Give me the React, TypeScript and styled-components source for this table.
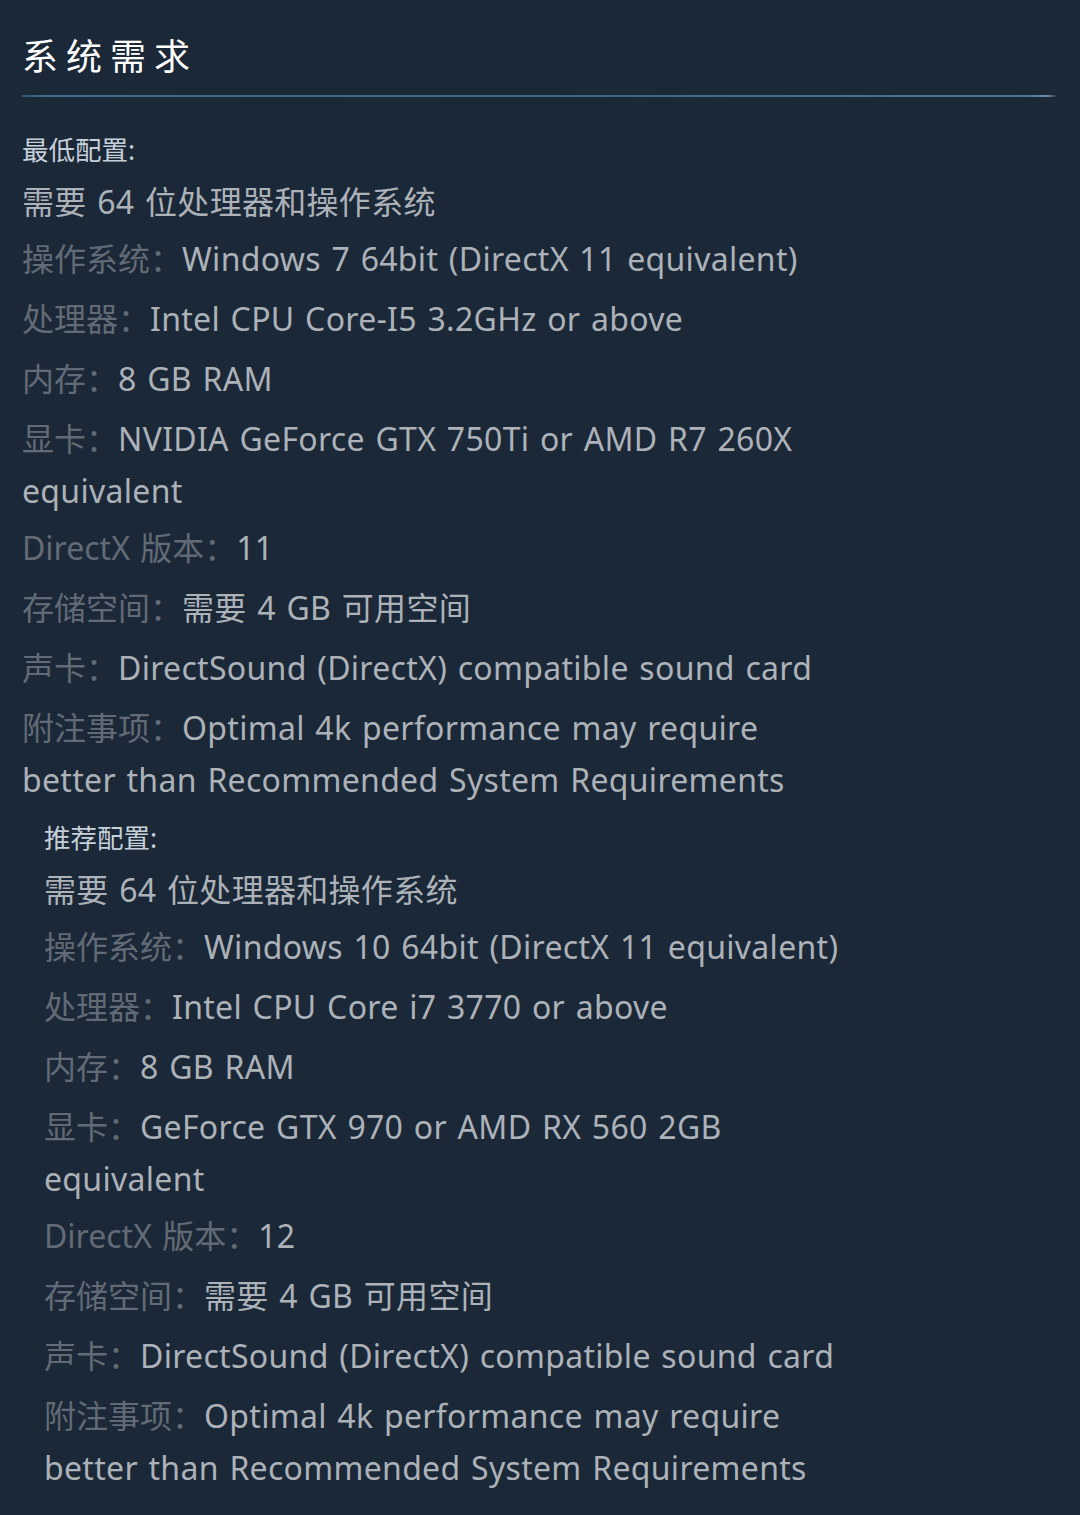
import React from "react";
import styled, { createGlobalStyle } from "styled-components";

const GlobalStyle = createGlobalStyle`
  html, body {
    margin: 0;
    padding: 0;
    background: #1b2838;
  }
  body {
    font-family: "Noto Sans", "Noto Sans CJK SC", sans-serif;
  }
`;

const Page = styled.div`
  min-height: 1515px;
  box-sizing: border-box;
  padding: 35px 22px 0;
  background: #1b2838;
  font-family: "Noto Sans", "Noto Sans CJK SC", sans-serif;
`;

const Title = styled.h2`
  margin: 0;
  font-size: 36px;
  line-height: 44px;
  font-weight: 400;
  letter-spacing: 8px;
  color: #ffffff;
`;

const Rule = styled.div`
  height: 2px;
  margin-top: 16px;
  background: linear-gradient(
    90deg,
    #2f5673 0%,
    #3d6b8b 2%,
    #3f6885 60%,
    #4b7594 97%,
    #6a8ca8 99%,
    rgba(60, 90, 115, 0) 100%
  );
`;

const Section = styled.section<{ $indent?: boolean }>`
  margin-top: ${(p) => (p.$indent ? "16px" : "35px")};
  margin-left: ${(p) => (p.$indent ? "22px" : "0")};
`;

const Heading = styled.div`
  font-size: 26.5px;
  line-height: 36px;
  color: #c6d0d9;
`;

const List = styled.ul`
  list-style: none;
  margin: 9px 0 0;
  padding: 0;
  width: 812px;
`;

const Item = styled.li`
  font-size: 32px;
  line-height: 49px;
  letter-spacing: 0.3px;
  word-spacing: 2px;
  color: #acb2b8;
  margin-bottom: 5px;
`;

const Label = styled.span`
  line-height: 55px;
  letter-spacing: 0;
  color: #626b75;
`;

type Row = { label?: string; value: string };

const minimum: Row[] = [
  { value: "需要 64 位处理器和操作系统" },
  { label: "操作系统：", value: "Windows 7 64bit (DirectX 11 equivalent)" },
  { label: "处理器：", value: "Intel CPU Core-I5 3.2GHz or above" },
  { label: "内存：", value: "8 GB RAM" },
  { label: "显卡：", value: "NVIDIA GeForce GTX 750Ti or AMD R7 260X equivalent" },
  { label: "DirectX 版本：", value: "11" },
  { label: "存储空间：", value: "需要 4 GB 可用空间" },
  { label: "声卡：", value: "DirectSound (DirectX) compatible sound card" },
  {
    label: "附注事项：",
    value: "Optimal 4k performance may require better than Recommended System Requirements",
  },
];

const recommended: Row[] = [
  { value: "需要 64 位处理器和操作系统" },
  { label: "操作系统：", value: "Windows 10 64bit (DirectX 11 equivalent)" },
  { label: "处理器：", value: "Intel CPU Core i7 3770 or above" },
  { label: "内存：", value: "8 GB RAM" },
  { label: "显卡：", value: "GeForce GTX 970 or AMD RX 560 2GB equivalent" },
  { label: "DirectX 版本：", value: "12" },
  { label: "存储空间：", value: "需要 4 GB 可用空间" },
  { label: "声卡：", value: "DirectSound (DirectX) compatible sound card" },
  {
    label: "附注事项：",
    value: "Optimal 4k performance may require better than Recommended System Requirements",
  },
];

const ReqList: React.FC<{ rows: Row[] }> = ({ rows }) => (
  <List>
    {rows.map((r, i) => (
      <Item key={i}>
        {r.label && <Label>{r.label}</Label>}
        {r.value}
      </Item>
    ))}
  </List>
);

export default function App() {
  return (
    <>
      <GlobalStyle />
      <Page>
        <Title>系统需求</Title>
        <Rule />
        <Section>
          <Heading>最低配置:</Heading>
          <ReqList rows={minimum} />
        </Section>
        <Section $indent>
          <Heading>推荐配置:</Heading>
          <ReqList rows={recommended} />
        </Section>
      </Page>
    </>
  );
}
